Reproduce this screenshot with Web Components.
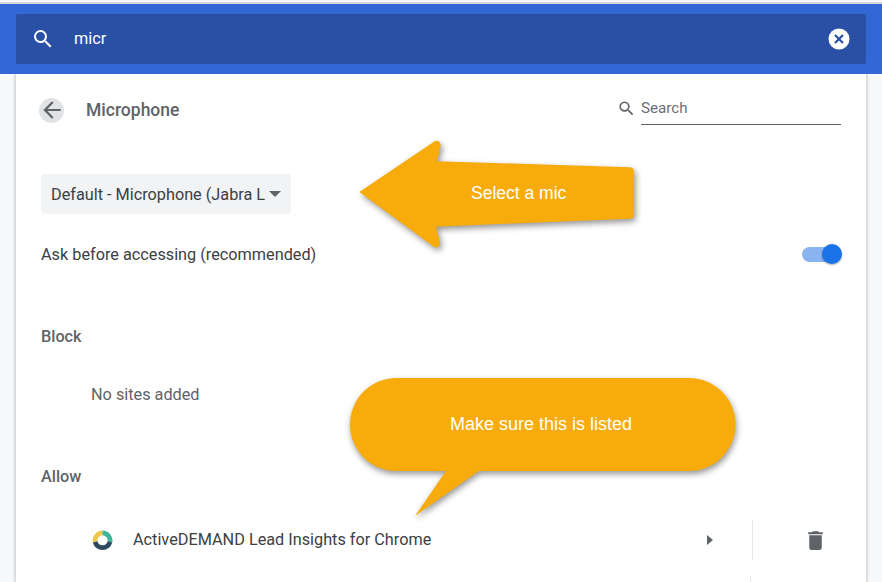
<!DOCTYPE html>
<html>
<head>
<meta charset="utf-8">
<title>Microphone settings</title>
<style>
  html, body { margin: 0; height: 582px; overflow: hidden; }
  body { background: #f8f9fa; font-family: Roboto, "Liberation Sans", sans-serif; color: #3c4043; position: relative; }
</style>
</head>
<body>
<top-bar query="micr"></top-bar>
<mic-page>
  <page-header title="Microphone"></page-header>
  <device-select>Default - Microphone (Jabra L</device-select>
  <ask-toggle>Ask before accessing (recommended)</ask-toggle>
  <section-label style="margin-top:51px">Block</section-label>
  <empty-note>No sites added</empty-note>
  <section-label style="margin-top:58px">Allow</section-label>
  <site-row>ActiveDEMAND Lead Insights for Chrome</site-row>
  <site-stub></site-stub>
</mic-page>
<callout-arrow>Select a mic</callout-arrow>
<callout-bubble>Make sure this is listed</callout-bubble>

<script>
function shadow(el, html) {
  el.attachShadow({ mode: "open" }).innerHTML = html;
}

class TopBar extends HTMLElement {
  connectedCallback() {
    shadow(this, `
      <style>
        :host { display: block; box-sizing: border-box; height: 74px; background: linear-gradient(#f4f5f7 0 2px, #d5d8dd 2px 4px, #3367d6 4px); padding: 14px 16px 10px; }
        .box { height: 50px; box-sizing: border-box; background: #2a50a5; border-radius: 2px; display: flex; align-items: center; padding: 0 16px 0 15px; color: #fff; }
        .q { flex: 1; margin-left: 19px; font: 400 16.25px Roboto, sans-serif; margin-top: -2px; }
        svg { display: block; flex: none; }
      </style>
      <div class="box">
        <svg width="24" height="24" viewBox="0 0 24 24" fill="#fff" style="margin-top:-1px"><path d="M15.5 14h-.79l-.28-.27A6.47 6.47 0 0 0 16 9.5 6.5 6.5 0 1 0 9.5 16c1.61 0 3.09-.59 4.23-1.57l.27.28v.79l5 4.99L20.49 19l-4.99-5zm-6 0C7.01 14 5 11.99 5 9.5S7.01 5 9.5 5 14 7.01 14 9.5 11.99 14 9.5 14z"/></svg>
        <span class="q">${this.getAttribute("query")}</span>
        <svg width="24" height="24" viewBox="0 0 24 24" style="margin-right:-1px"><circle cx="12" cy="12" r="10.5" fill="#fff"/><path d="M8 8l8 8M16 8l-8 8" stroke="#2a50a5" stroke-width="2.2" fill="none"/></svg>
      </div>`);
  }
}

class MicPage extends HTMLElement {
  constructor() {
    super();
    shadow(this, `
      <style>
        :host { display: block; box-sizing: border-box; height: 508px; margin: 0 16px; background: #fff; box-shadow: 0 0 3px 1px rgba(60,64,67,.28); overflow: hidden; clip-path: inset(0 -6px 0 -6px); }
      </style>
      <slot></slot>`);
  }
}

class PageHeader extends HTMLElement {
  connectedCallback() {
    shadow(this, `
      <style>
        :host { display: flex; align-items: center; height: 72px; padding: 0 25px 0 23px; }
        .back { width: 25px; height: 25px; border-radius: 50%; background: #e1e3e6; display: flex; align-items: center; justify-content: center; flex: none; }
        .back svg { flex: none; }
        h1 { flex: 1; margin: 0 0 0 22px; font: 500 17.5px Roboto, sans-serif; color: #5f6368; }
        .search { width: 224px; display: flex; align-items: flex-start; margin-top: -2px; }
        .search svg { margin-top: 6px; margin-right: 5px; }
        .field { flex: 1; height: 32px; box-sizing: border-box; border-bottom: 1px solid #5f6368; font: 400 15.2px/30px Roboto, sans-serif; color: #6b6f74; }
      </style>
      <div class="back"><svg width="26" height="26" viewBox="0 0 24 24" fill="#5f6368"><path d="M20 11H7.83l5.59-5.59L12 4l-8 8 8 8 1.41-1.41L7.83 13H20v-2z"/></svg></div>
      <h1>${this.getAttribute("title")}</h1>
      <div class="search">
        <svg width="19" height="19" viewBox="0 0 24 24" fill="#5f6368"><path d="M15.5 14h-.79l-.28-.27A6.47 6.47 0 0 0 16 9.5 6.5 6.5 0 1 0 9.5 16c1.61 0 3.09-.59 4.23-1.57l.27.28v.79l5 4.99L20.49 19l-4.99-5zm-6 0C7.01 14 5 11.99 5 9.5S7.01 5 9.5 5 14 7.01 14 9.5 11.99 14 9.5 14z"/></svg>
        <div class="field">Search</div>
      </div>`);
  }
}

class DeviceSelect extends HTMLElement {
  constructor() {
    super();
    shadow(this, `
      <style>
        :host { display: flex; align-items: center; box-sizing: border-box; width: 250px; height: 40px; margin: 28px 0 0 25px; padding: 0 10px 0 10px; background: #f1f3f4; border-radius: 4px; font: 400 16.25px Roboto, sans-serif; color: #3c4043; white-space: nowrap; overflow: hidden; }
        .t { flex: 1; overflow: hidden; }
        i { flex: none; width: 0; height: 0; border: 6px solid transparent; border-top: 6px solid #5f6368; border-bottom: 0; margin-left: 4px; }
      </style>
      <span class="t"><slot></slot></span><i></i>`);
  }
}

class AskToggle extends HTMLElement {
  constructor() {
    super();
    shadow(this, `
      <style>
        :host { display: flex; align-items: center; justify-content: space-between; height: 40px; margin-top: 20px; padding: 0 24px 0 25px; font: 400 16.25px Roboto, sans-serif; color: #3c4043; }
        .sw { position: relative; width: 40px; height: 15px; }
        .track { position: absolute; left: 0; right: 2px; top: 0; bottom: 0; background: #8ab4f0; border-radius: 8px; }
        .knob { position: absolute; right: 0; top: -3px; width: 20px; height: 20px; border-radius: 50%; background: #1a73e8; box-shadow: 0 1px 2px rgba(0,0,0,.35); }
      </style>
      <span><slot></slot></span>
      <div class="sw"><div class="track"></div><div class="knob"></div></div>`);
  }
}

class SectionLabel extends HTMLElement {
  constructor() {
    super();
    shadow(this, `
      <style>
        :host { display: block; height: 24px; padding-left: 25px; font: 500 16.25px/24px Roboto, sans-serif; color: #5f6368; }
      </style>
      <slot></slot>`);
  }
}

class EmptyNote extends HTMLElement {
  constructor() {
    super();
    shadow(this, `
      <style>
        :host { display: block; height: 24px; margin-top: 34px; padding-left: 75px; font: 400 16.25px/24px Roboto, sans-serif; color: #5f6368; }
      </style>
      <slot></slot>`);
  }
}

class SiteRow extends HTMLElement {
  constructor() {
    super();
    shadow(this, `
      <style>
        :host { display: flex; align-items: center; height: 40px; margin-top: 31px; padding-left: 76px; font: 400 16.25px Roboto, sans-serif; color: #3c4043; }
        .name { flex: 1; margin-left: 20px; margin-top: -2px; }
        .arrow { width: 0; height: 0; border-left: 6px solid #5f6368; border-top: 5px solid transparent; border-bottom: 5px solid transparent; margin-right: 39px; }
        .div { width: 1px; height: 40px; background: #e8e9eb; }
        .del { width: 113px; box-sizing: border-box; padding-left: 12px; display: flex; justify-content: center; }
        svg { display: block; flex: none; }
      </style>
      <svg width="21" height="21" viewBox="0 0 22 22" fill="none" stroke-width="5">
        <path d="M3.3 12.5A8 8 0 0 1 11 3" stroke="#f2c64a"/>
        <path d="M11 3A8 8 0 0 1 18.8 12.5" stroke="#3db39a"/>
        <path d="M18.8 12.5A8 8 0 0 1 3.3 12.5" stroke="#2d4a5e"/>
      </svg>
      <span class="name"><slot></slot></span>
      <div class="arrow"></div>
      <div class="div"></div>
      <div class="del"><svg width="25" height="25" viewBox="0 0 24 24" fill="#5f6368"><path d="M6 19c0 1.1.9 2 2 2h8c1.1 0 2-.9 2-2V7H6v12zM19 4h-3.5l-1-1h-5l-1 1H5v2h14V4z"/></svg></div>`);
  }
}

class SiteStub extends HTMLElement {
  constructor() {
    super();
    shadow(this, `
      <style>
        :host { display: block; height: 20px; margin-top: 16px; padding-left: 734px; }
        div { width: 1px; height: 20px; background: #e8e9eb; }
      </style>
      <div></div>`);
  }
}

class CalloutArrow extends HTMLElement {
  constructor() {
    super();
    shadow(this, `
      <style>
        :host { position: absolute; left: 350px; top: 132px; width: 296px; height: 126px; }
        svg { position: absolute; left: 0; top: 0; overflow: visible; filter: drop-shadow(2px 3px 3px rgba(0,0,0,.42)); }
        span { position: absolute; left: 121px; top: 51px; font: 400 17.5px "Liberation Sans", Arial, sans-serif; color: #fff; white-space: nowrap; }
      </style>
      <svg width="296" height="126" viewBox="0 0 296 126">
        <path d="M10.5 60 L84 10.5 Q89 7.5 90 13 L86 30 L280 36 Q283 36 283 39 L283 83 Q283 86 280 86 L85 94 L89 110 Q90 116 84 114 Z" fill="#f8ac0b" stroke="#f8ac0b" stroke-linejoin="round" stroke-width="1.5"/>
      </svg>
      <span><slot></slot></span>`);
  }
}

class CalloutBubble extends HTMLElement {
  constructor() {
    super();
    shadow(this, `
      <style>
        :host { position: absolute; left: 350px; top: 378px; width: 386px; height: 140px; }
        svg { position: absolute; left: 0; top: 0; overflow: visible; filter: drop-shadow(1px 3px 3px rgba(0,0,0,.42)); }
        span { position: absolute; left: 100px; top: 36px; font: 400 18px "Liberation Sans", Arial, sans-serif; color: #fff; white-space: nowrap; }
      </style>
      <svg width="386" height="140" viewBox="0 0 386 140">
        <path d="M46.5 0 H339 A46.5 46.5 0 0 1 339 93 H129 L65 138 L96 93 H46.5 A46.5 46.5 0 0 1 46.5 0 Z" fill="#f8ac0b"/>
      </svg>
      <span><slot></slot></span>`);
  }
}

customElements.define("top-bar", TopBar);
customElements.define("mic-page", MicPage);
customElements.define("page-header", PageHeader);
customElements.define("device-select", DeviceSelect);
customElements.define("ask-toggle", AskToggle);
customElements.define("section-label", SectionLabel);
customElements.define("empty-note", EmptyNote);
customElements.define("site-row", SiteRow);
customElements.define("site-stub", SiteStub);
customElements.define("callout-arrow", CalloutArrow);
customElements.define("callout-bubble", CalloutBubble);
</script>
</body>
</html>
